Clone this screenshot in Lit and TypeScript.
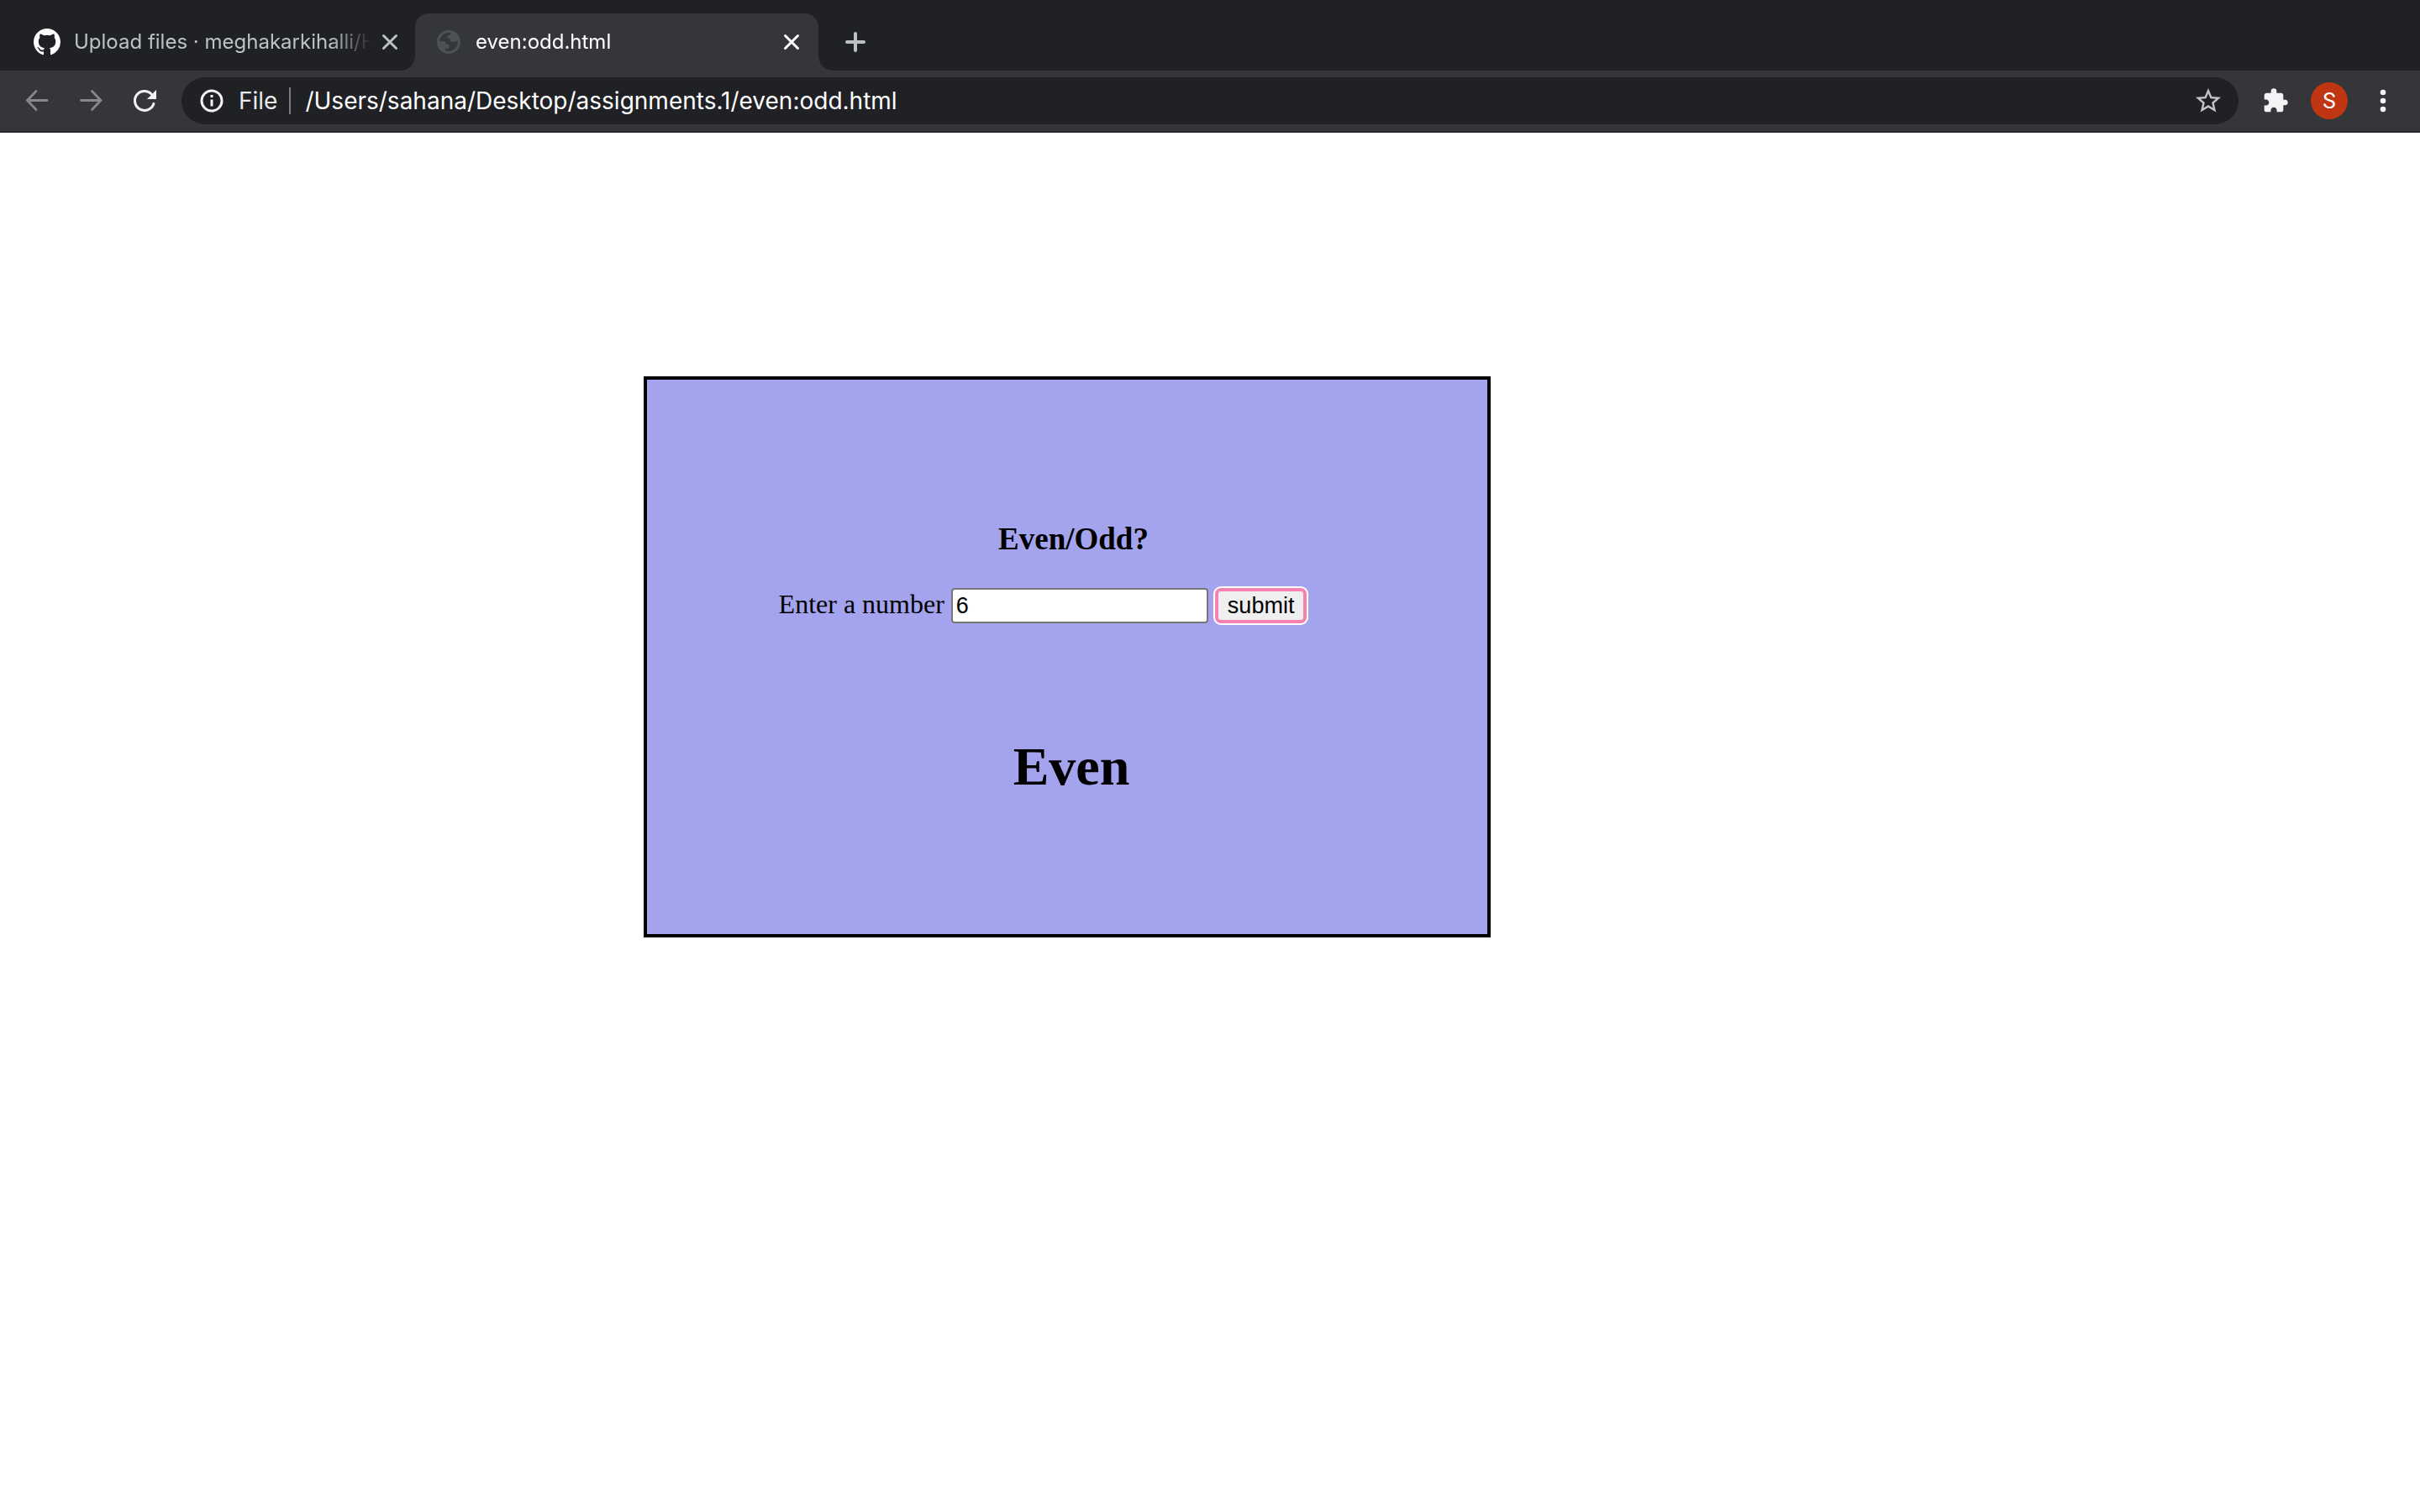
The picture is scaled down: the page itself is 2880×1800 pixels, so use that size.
import { LitElement, html, css, svg } from "lit";
import { customElement, state, query } from "lit/decorators.js";

const icons = {
  github: svg`<path fill="#fff" d="M8 0C3.58 0 0 3.58 0 8c0 3.54 2.29 6.53 5.47 7.59.4.07.55-.17.55-.38 0-.19-.01-.82-.01-1.49-2.01.37-2.53-.49-2.69-.94-.09-.23-.48-.94-.82-1.13-.28-.15-.68-.52-.01-.53.63-.01 1.08.58 1.23.82.72 1.21 1.87.87 2.33.66.07-.52.28-.87.51-1.07-1.78-.2-3.64-.89-3.64-3.95 0-.87.31-1.59.82-2.15-.08-.2-.36-1.02.08-2.12 0 0 .67-.21 2.2.82.64-.18 1.32-.27 2-.27s1.36.09 2 .27c1.53-1.04 2.2-.82 2.2-.82.44 1.1.16 1.92.08 2.12.51.56.82 1.27.82 2.15 0 3.07-1.87 3.75-3.65 3.95.29.25.54.73.54 1.48 0 1.07-.01 1.93-.01 2.2 0 .21.15.46.55.38A8.01 8.01 0 0 0 16 8c0-4.42-3.58-8-8-8z"/>`,
  globe: svg`<circle cx="14" cy="14" r="14" fill="#4d5156"/><path fill="#35363a" d="M3 13C3.500 7.500 8 3 14 3c1 0 1.800.1 2.600.4-.2 1.600-1 2.400-2.600 2.600-1.400.2-2 .8-1.800 2 .2 1.400 1 1.400 2.400 1.600.8.2 1 .8 1 1.600 0 1.600 1 2.600 2.600 2.600h2.600c1.200 0 1.800-.8 4.200-.8 0 6.600-5 12-11 12-1.600 0-3-.2-4.400-.8v-2.600h3.200c1 0 1.600-.6 1.600-1.600v-1.600c0-1-.6-1.600-1.600-1.600h-1.600c-.4-2.600-1.600-3.800-4-3.800z"/>`,
  close: svg`<path d="M2 2 14 14M14 2 2 14" fill="none" stroke="currentColor" stroke-width="2.400" stroke-linecap="round"/>`,
  plus: svg`<path d="M12 2v20M2 12h20" fill="none" stroke="currentColor" stroke-width="4" stroke-linecap="round"/>`,
  back: svg`<path d="M28 15.500H5M15 4.500 4.500 15.500 15 26.500" fill="none" stroke="currentColor" stroke-width="2.800" stroke-linecap="round"/>`,
  forward: svg`<path d="M4.500 15.500h23M17.500 4.500 28 15.500 17.500 26.500" fill="none" stroke="currentColor" stroke-width="2.800" stroke-linecap="round"/>`,
  reload: svg`<path d="M26.900 19.500A11.500 11.500 0 1 1 24 7.700" fill="none" stroke="currentColor" stroke-width="3" stroke-linecap="round"/><path d="M30 3v11H19z" fill="currentColor"/>`,
  info: svg`<circle cx="14" cy="14" r="12" fill="none" stroke="currentColor" stroke-width="3"/><path d="M14 12.500v8M14 7v3" fill="none" stroke="currentColor" stroke-width="3"/>`,
  star: svg`<path fill="currentColor" d="M22 9.240l-7.190-.62L12 2 9.190 8.630 2 9.240l5.460 4.730L5.820 21 12 17.270 18.180 21l-1.630-7.030L22 9.240zM12 15.400l-3.760 2.270 1-4.280-3.320-2.880 4.380-.38L12 6.100l1.710 4.040 4.380.38-3.320 2.880 1 4.280L12 15.400z"/>`,
  puzzle: svg`<path fill="currentColor" d="M20.500 11H19V7c0-1.100-.9-2-2-2h-4V3.500a2.500 2.500 0 0 0-5 0V5H4c-1.100 0-1.990.9-1.990 2v3.800H3.500c1.490 0 2.700 1.210 2.700 2.700s-1.210 2.700-2.700 2.700H2V20c0 1.100.9 2 2 2h3.800v-1.500c0-1.490 1.210-2.700 2.700-2.700s2.700 1.210 2.700 2.700V22H17c1.100 0 2-.9 2-2v-4h1.500a2.500 2.500 0 0 0 0-5z"/>`,
  dots: svg`<g fill="currentColor"><circle cx="16" cy="6" r="3.300"/><circle cx="16" cy="16" r="3.300"/><circle cx="16" cy="26" r="3.300"/></g>`,
};

function icon(name: keyof typeof icons, size: number, box: number) {
  return html`<svg width=${size} height=${size} viewBox="0 0 ${box} ${box}" aria-hidden="true">${icons[name]}</svg>`;
}

@customElement("browser-bar")
class BrowserBar extends LitElement {
  static styles = css`
    :host {
      display: block;
      font-family: Inter, Roboto, "Liberation Sans", sans-serif;
      background: #202124;
    }
    svg {
      display: block;
      flex: none;
    }
    button {
      display: grid;
      place-items: center;
      flex: none;
      padding: 0;
      border: 0;
      background: none;
      font: inherit;
      color: inherit;
    }
    .tabs {
      display: flex;
      align-items: stretch;
      height: 68px;
      padding: 16px 16px 0;
    }
    .tab {
      display: flex;
      align-items: center;
      box-sizing: border-box;
      width: 480px;
      padding: 0 20px 0 26px;
      color: #bdc1c6;
      font-size: 24px;
      line-height: 32px;
    }
    .tab.background {
      width: 478px;
      padding: 0 18px 0 24px;
    }
    .tab.active {
      position: relative;
      background: #35363a;
      color: #fff;
      border-radius: 16px 16px 0 0;
    }
    .tab.active::before,
    .tab.active::after {
      content: "";
      position: absolute;
      bottom: 0;
      width: 16px;
      height: 16px;
    }
    .tab.active::before {
      right: 100%;
      background: radial-gradient(circle at 0 0, #202124 15px, #35363a 16px);
    }
    .tab.active::after {
      left: 100%;
      background: radial-gradient(circle at 100% 0, #202124 15px, #35363a 16px);
    }
    .title {
      flex: 1;
      min-width: 0;
      margin: 0 6px 0 16px;
      overflow: hidden;
      white-space: nowrap;
      mask-image: linear-gradient(to right, #000 calc(100% - 52px), transparent calc(100% - 4px));
    }
    .active .title {
      margin-left: 18px;
    }
    .close {
      width: 24px;
      height: 32px;
    }
    .new {
      width: 56px;
      margin-left: 16px;
      color: #bdc1c6;
    }
    .toolbar {
      display: flex;
      align-items: center;
      height: 72px;
      background: #35363a;
      border-bottom: 2px solid #28292c;
      color: #f1f3f4;
    }
    .nav {
      display: flex;
      gap: 32px;
      padding: 0 28px;
    }
    .nav button:disabled {
      color: #87888b;
    }
    .address {
      display: flex;
      align-items: center;
      flex: 1;
      min-width: 0;
      height: 56px;
      padding: 0 18px 0 22px;
      border-radius: 28px;
      background: #202124;
      font-size: 28px;
    }
    .scheme {
      margin-left: 18px;
      padding-right: 14px;
      border-right: 2px solid #7b7c7f;
      line-height: 32px;
      color: #e8eaed;
    }
    .url {
      flex: 1;
      min-width: 0;
      margin-left: 17px;
      padding: 0;
      border: 0;
      outline: 0;
      background: none;
      font: inherit;
      color: #fff;
    }
    .star {
      color: #c4c4c4;
    }
    .actions {
      display: flex;
      align-items: center;
      gap: 26px;
      padding: 0 28px;
    }
    .avatar {
      width: 44px;
      height: 44px;
      border-radius: 50%;
      background: #c13612;
      color: #fff;
      font-family: Roboto, sans-serif;
      font-size: 26px;
    }
  `;

  render() {
    return html`
      <nav class="tabs" aria-label="Tabs">
        <div class="tab background">
          ${icon("github", 32, 16)}
          <span class="title">Upload files · meghakarkihalli/H</span>
          <button class="close" aria-label="Close tab">${icon("close", 20, 16)}</button>
        </div>
        <div class="tab active">
          ${icon("globe", 28, 28)}
          <span class="title">even:odd.html</span>
          <button class="close" aria-label="Close tab">${icon("close", 20, 16)}</button>
        </div>
        <button class="new" aria-label="New tab">${icon("plus", 24, 24)}</button>
      </nav>
      <div class="toolbar">
        <div class="nav">
          <button disabled aria-label="Back">${icon("back", 32, 32)}</button>
          <button disabled aria-label="Forward">${icon("forward", 32, 32)}</button>
          <button aria-label="Reload">${icon("reload", 32, 32)}</button>
        </div>
        <div class="address">
          ${icon("info", 28, 28)}
          <label class="scheme" for="url">File</label>
          <input class="url" id="url" spellcheck="false" value="/Users/sahana/Desktop/assignments.1/even:odd.html" />
          <button class="star" aria-label="Bookmark">${icon("star", 36, 24)}</button>
        </div>
        <div class="actions">
          <button aria-label="Extensions">${icon("puzzle", 32, 24)}</button>
          <button class="avatar" aria-label="Profile">S</button>
          <button aria-label="Menu">${icon("dots", 32, 32)}</button>
        </div>
      </div>
    `;
  }
}

@customElement("even-odd")
class EvenOdd extends LitElement {
  static styles = css`
    :host {
      display: block;
      font-family: "Liberation Serif", "Times New Roman", serif;
      color: #000;
    }
    .card {
      display: flex;
      flex-direction: column;
      align-items: center;
      padding: 169px 0 162px;
      border: 4px solid #000;
      background: #a4a4ee;
    }
    .heading {
      margin: 0;
      padding-left: 15px;
      font-size: 37px;
      line-height: 42px;
    }
    .form {
      display: flex;
      align-items: baseline;
      gap: 8px;
      margin-top: 37px;
      padding-right: 58px;
      font-size: 32px;
      line-height: 36px;
    }
    .number,
    .submit {
      box-sizing: border-box;
      height: 42px;
      font-family: "Liberation Sans", Arial, sans-serif;
      font-size: 27px;
      color: #000;
    }
    .number {
      width: 306px;
      padding: 0 4px;
      border: 2px solid #767676;
      border-radius: 4px;
      outline: 0;
      background: #fff;
    }
    .submit {
      padding: 0 11px;
      border: 4px solid #f582b0;
      border-radius: 7px;
      outline: 0;
      background: #efefef;
      box-shadow: 0 0 0 2px #fff;
    }
    .result {
      margin: 134px 0 0;
      padding-left: 10px;
      font-size: 64px;
      line-height: 74px;
    }
  `;

  @state() private result = "Even";
  @query(".number") private field!: HTMLInputElement;

  private check(event: Event) {
    event.preventDefault();
    this.result = Number(this.field.value) % 2 === 0 ? "Even" : "Odd";
  }

  render() {
    return html`
      <section class="card">
        <h3 class="heading">Even/Odd?</h3>
        <form class="form" @submit=${this.check}>
          <label for="number">Enter a number</label>
          <input class="number" id="number" type="text" value="6" />
          <button class="submit" type="submit">submit</button>
        </form>
        <h1 class="result">${this.result}</h1>
      </section>
    `;
  }
}

@customElement("app-root")
class AppRoot extends LitElement {
  static styles = css`
    :host {
      display: block;
      min-height: 100vh;
      background: #fff;
    }
    .page {
      display: grid;
      grid-template-columns: 35vw;
      padding: 290px 16px 16px 766px;
    }
  `;

  render() {
    return html`
      <browser-bar></browser-bar>
      <main class="page"><even-odd></even-odd></main>
    `;
  }
}
